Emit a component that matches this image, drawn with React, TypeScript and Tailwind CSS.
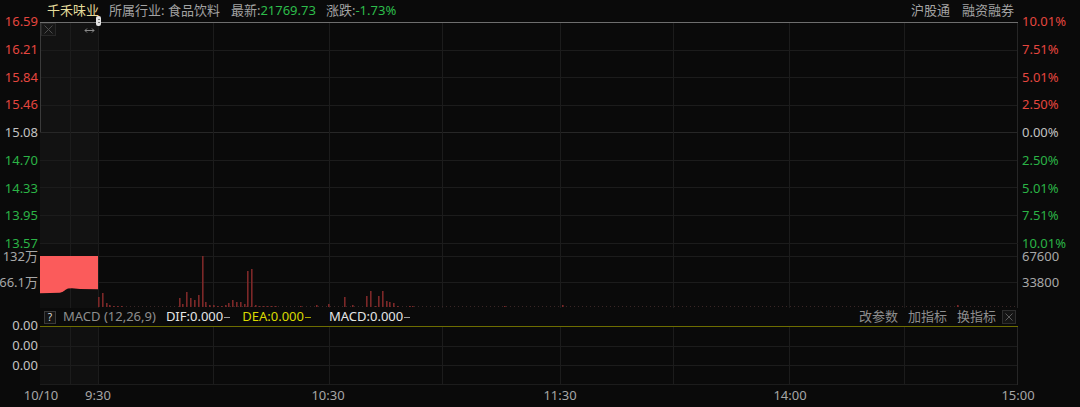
import React from "react";

const RED = "text-[#e5463f]";
const GREEN = "text-[#2bb446]";
const GRAY = "text-[#c2c2c2]";
const GRID = "#1c1c1c";

// vertical time grid, relative to chart column (x = 40)
const VLINES = [30, 58, 173, 289, 402, 520, 633, 749, 864];

const priceLeft: [string, string][] = [
  ["16.59", RED],
  ["16.21", RED],
  ["15.84", RED],
  ["15.46", RED],
  ["15.08", GRAY],
  ["14.70", GREEN],
  ["14.33", GREEN],
  ["13.95", GREEN],
  ["13.57", GREEN],
];

const priceRight: [string, string][] = [
  ["10.01%", RED],
  ["7.51%", RED],
  ["5.01%", RED],
  ["2.50%", RED],
  ["0.00%", GRAY],
  ["2.50%", GREEN],
  ["5.01%", GREEN],
  ["7.51%", GREEN],
  ["10.01%", GREEN],
];

// volume bars: [absolute x, absolute top y]
const BARS: [number, number][] = [
  [98, 297], [102, 293], [106, 303], [109, 305], [113, 306], [117, 306], [121, 306],
  [179, 298], [182, 304], [186, 292], [190, 298], [194, 300], [198, 295], [202, 256],
  [205, 302], [209, 305], [213, 305], [217, 306], [221, 306], [225, 305], [228, 303],
  [232, 300], [236, 302], [240, 302], [244, 304], [247, 271], [251, 269], [255, 305],
  [259, 306], [263, 306], [267, 306], [271, 306], [275, 306], [300, 306], [316, 305],
  [328, 304], [344, 297], [352, 305], [366, 296], [370, 291], [375, 306], [378, 296],
  [382, 291], [386, 301], [389, 302], [393, 303], [397, 306], [409, 306], [412, 306],
  [504, 306], [562, 305], [957, 305],
];

function VGrid({ h }: { h: number }) {
  return (
    <>
      {VLINES.map((x) => (
        <line key={x} x1={x + 0.5} x2={x + 0.5} y1={0} y2={h} stroke={GRID} />
      ))}
      <line x1={977.5} x2={977.5} y1={0} y2={h} stroke="#262626" />
    </>
  );
}

function PricePanel() {
  const rows = [1, 2, 3, 4, 5, 6, 7];
  return (
    <svg width="978" height="222" className="block">
      <rect x="0" y="0" width="58" height="222" fill="#121212" />
      {rows.map((i) => {
        const y = Math.round(i * 27.5) + 0.5;
        return <line key={i} x1={0} x2={978} y1={y} y2={y} stroke={i === 4 ? "#272727" : GRID} />;
      })}
      <VGrid h={222} />
      <line x1={0.5} x2={0.5} y1={0} y2={110} stroke="#3a3a3a" />
      <line x1={0} x2={978} y1={221.5} y2={221.5} stroke={GRID} />
      <line x1={0} x2={978} y1={0.5} y2={0.5} stroke="#6e6e6e" />
      {/* close box */}
      <rect x="1.5" y="1.5" width="14" height="12" fill="#161616" stroke="#272727" />
      <path d="M4.5 3.5 L12.5 11.5 M12.5 3.5 L4.5 11.5" stroke="#4c4c4c" strokeWidth="1" />
      {/* resize arrow */}
      <path d="M45 8.5 H54 M47 6.5 L45 8.5 L47 10.5 M52 6.5 L54 8.5 L52 10.5" stroke="#8a8a8a" fill="none" strokeWidth="1" />
    </svg>
  );
}

function VolumePanel() {
  return (
    <svg width="978" height="64" className="block">
      <rect x="0" y="0" width="58" height="64" fill="#0f0f0f" />
      <line x1={0} x2={978} y1={12.5} y2={12.5} stroke={GRID} />
      <line x1={0} x2={978} y1={38.5} y2={38.5} stroke={GRID} />
      <VGrid h={64} />
      <path
        d="M0 12 H58 V45.3 L40 45 L32 44.2 L28 44.5 C25 45.5 24 48 20 48.7 L0 49.3 Z"
        fill="#fb5b5b"
      />
      <line x1={58} x2={978} y1={62.5} y2={62.5} stroke="#3a2626" strokeDasharray="1 3" />
      {BARS.map(([x, top]) => (
        <rect key={x} x={x - 40} y={top - 244} width="1.6" height={307 - top} fill="#7c2828" />
      ))}
    </svg>
  );
}

function MacdPanel() {
  return (
    <svg width="978" height="59" className="block">
      <rect x="0" y="0" width="58" height="59" fill="#101010" />
      <line x1={0} x2={978} y1={20.5} y2={20.5} stroke={GRID} />
      <line x1={0} x2={978} y1={39.5} y2={39.5} stroke={GRID} />
      <line x1={0} x2={978} y1={58.5} y2={58.5} stroke={GRID} />
      <VGrid h={59} />
      <line x1={0} x2={978} y1={0.5} y2={0.5} stroke="#6d6d00" />
    </svg>
  );
}

function Dash({ color }: { color: string }) {
  return <span className={`ml-[1px] h-px w-[6px] ${color}`} />;
}

export default function App() {
  return (
    <div className="flex h-[407px] w-[1080px] flex-col overflow-hidden bg-[#0a0a0a] font-['Noto_Sans','Noto_Sans_CJK_SC',sans-serif] text-[13px]">
      <div className="flex h-[385px]">
        {/* left axis */}
        <div className="flex w-[40px] flex-col items-end pr-[2px] pt-[15px] leading-[13px]">
          <div className="flex h-[235px] flex-col items-end justify-between">
            {priceLeft.map(([t, c]) => (
              <span key={t} className={c}>
                {t}
              </span>
            ))}
          </div>
          <span className="whitespace-nowrap text-[#a8a8a8]">132万</span>
          <span className="mt-[13px] whitespace-nowrap text-[#a8a8a8]">66.1万</span>
          <span className="mt-[30px] text-[#c4c4c4]">0.00</span>
          <span className="mt-[7px] text-[#c4c4c4]">0.00</span>
          <span className="mt-[7px] text-[#c4c4c4]">0.00</span>
        </div>

        {/* chart column */}
        <div className="relative flex w-[978px] flex-col">
          <div className="flex h-[22px] items-center whitespace-nowrap pl-[7px] pr-[4px]">
            <span className="text-[#e6dd9c]">千禾味业</span>
            <span className="ml-[10px] text-[#a3a3a3]">所属行业: 食品饮料</span>
            <span className="ml-[11px] text-[#a3a3a3]">
              最新:<span className="text-[#2dbd4a]">21769.73</span>
            </span>
            <span className="ml-[10px] text-[#a3a3a3]">
              涨跌:<span className="text-[#2dbd4a]">-1.73%</span>
            </span>
            <span className="ml-auto text-[#a3a3a3]">沪股通</span>
            <span className="ml-[12px] text-[#a3a3a3]">融资融券</span>
          </div>
          <PricePanel />
          <VolumePanel />
          <div className="flex h-[18px] items-center whitespace-nowrap pl-[4px] pr-[2px]">
            <span className="flex h-[13px] w-[12px] items-center justify-center border border-[#3a3a3a] bg-[#151515] text-[10px] leading-none text-[#dcdcdc]">
              ?
            </span>
            <span className="ml-[7px] text-[#8e8e8e]">MACD (12,26,9)</span>
            <span className="ml-[10px] flex items-center text-[#e6e6e6]">
              DIF:0.000
              <Dash color="bg-[#9a9a9a]" />
            </span>
            <span className="ml-[12px] flex items-center text-[#d9d900]">
              DEA:0.000
              <Dash color="bg-[#a8a800]" />
            </span>
            <span className="ml-[18px] flex items-center text-[#e6e6e6]">
              MACD:0.000
              <Dash color="bg-[#9a9a9a]" />
            </span>
            <span className="ml-auto text-[#8e8e8e]">改参数</span>
            <span className="ml-[10px] text-[#8e8e8e]">加指标</span>
            <span className="ml-[10px] text-[#8e8e8e]">换指标</span>
            <span className="ml-[6px] flex h-[14px] w-[14px] items-center justify-center border border-[#2e2e2e] bg-[#141414]">
              <svg width="8" height="8" viewBox="0 0 8 8">
                <path d="M0.5 0.5 L7.5 7.5 M7.5 0.5 L0.5 7.5" stroke="#5a5a5a" />
              </svg>
            </span>
          </div>
          <MacdPanel />
          {/* drag handle */}
          <div className="absolute left-[56px] top-[16px] flex h-[10px] w-[5px] flex-col items-center justify-center gap-[2px] rounded-[2px] bg-[#e2e2e2]">
            <span className="h-px w-[2px] bg-[#777]" />
            <span className="h-px w-[2px] bg-[#777]" />
          </div>
        </div>

        {/* right axis */}
        <div className="flex w-[62px] flex-col pl-[4px] pt-[15px] leading-[13px]">
          <div className="flex h-[235px] flex-col justify-between">
            {priceRight.map(([t, c], i) => (
              <span key={i} className={c}>
                {t}
              </span>
            ))}
          </div>
          <span className="text-[#a8a8a8]">67600</span>
          <span className="mt-[13px] text-[#a8a8a8]">33800</span>
        </div>
      </div>

      {/* time axis */}
      <div className="flex h-[22px] items-center pl-[21px] text-[#a6a6a6]">
        <span className="w-[40px] text-center">10/10</span>
        <span className="ml-[17px] w-[40px] text-center">9:30</span>
        <span className="ml-[190px] w-[40px] text-center">10:30</span>
        <span className="ml-[192px] w-[40px] text-center">11:30</span>
        <span className="ml-[190px] w-[40px] text-center">14:00</span>
        <span className="ml-[188px] w-[40px] text-center">15:00</span>
      </div>
    </div>
  );
}
